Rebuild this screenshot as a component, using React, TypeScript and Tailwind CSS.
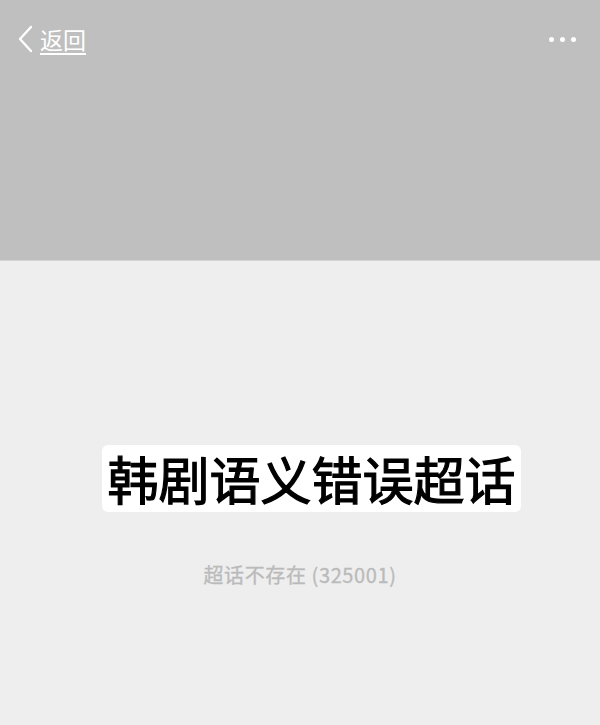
import React from 'react';

const font = { fontFamily: '"Noto Sans CJK SC", "Liberation Sans", sans-serif' };

export default function App() {
  return (
    <div className="flex h-[725px] w-[600px] flex-col bg-[#eeeeee]" style={font}>
      <div className="h-[261px] border-b border-[#d4d4d4] bg-[#bfbfbf]">
        <div className="flex items-center justify-between pl-[16px] pr-[24px] pt-[24px]">
          <div className="flex items-center gap-[6px] text-white">
            <svg width="18" height="30" viewBox="0 0 18 30" fill="none">
              <path d="M15 3 L4 15 L15 27" stroke="white" strokeWidth="2.4" strokeLinecap="round" strokeLinejoin="round" />
            </svg>
            <span className="text-[23px] leading-[30px] underline underline-offset-[4px] decoration-[2px]">返回</span>
          </div>
          <div className="flex items-center gap-[6px]">
            <span className="h-[5px] w-[5px] rounded-full bg-white" />
            <span className="h-[5px] w-[5px] rounded-full bg-white" />
            <span className="h-[5px] w-[5px] rounded-full bg-white" />
          </div>
        </div>
      </div>
      <div className="flex flex-col items-center pt-[184px]">
        <div className="ml-[23px] rounded-[6px] bg-white px-[5px] text-[51px] leading-[67px] text-black [-webkit-text-stroke:1.2px_black]">
          韩剧语义错误超话
        </div>
        <div className="mt-[48px] text-[20px] tracking-[0.6px] text-[#bababa] [-webkit-text-stroke:0.3px_#bababa]">超话不存在 (325001)</div>
      </div>
    </div>
  );
}
